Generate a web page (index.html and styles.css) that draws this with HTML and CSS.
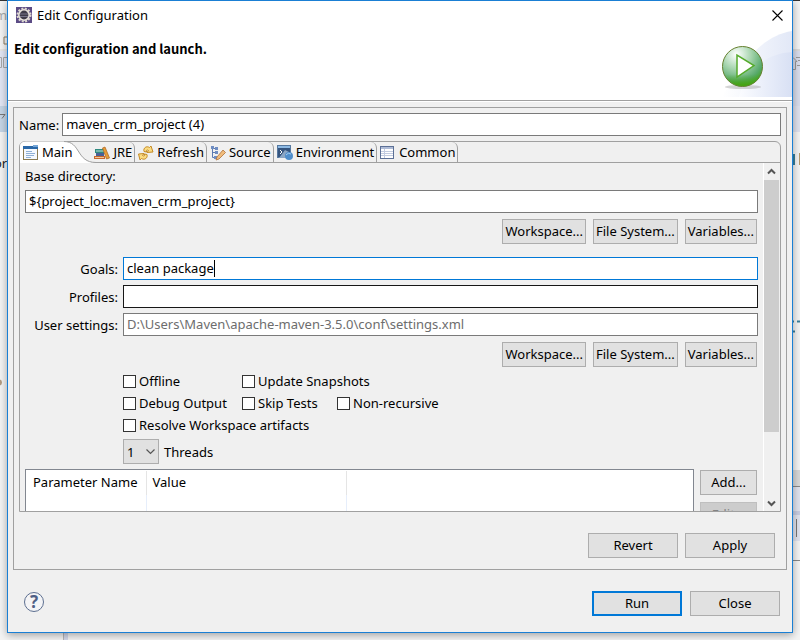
FILE: index.html
```
<!DOCTYPE html>
<html lang="en">
<head>
<meta charset="utf-8">
<title>Edit Configuration</title>
<link rel="stylesheet" href="styles.css">
</head>
<body>
<div class="desktop">
  <div class="backdrop">
    <svg class="strip" viewBox="0 0 7 640" width="7" height="640" aria-hidden="true">
      <rect width="7" height="1" fill="#333"/>
      <rect y="1" width="7" height="48" fill="#f4f4f4"/>
      <path d="M7 37H4V44H7" fill="none" stroke="#8f7f60"/>
      <rect y="49" width="7" height="2" fill="#e6e6e6"/>
      <rect y="51" width="7" height="55" fill="#e2e6f4"/>
      <path d="M0 57.500H1.500V67.500H0M7 57.500H3.500V67.500H7" fill="none" stroke="#a8a8a8"/>
      <rect y="106" width="7" height="26" fill="#c5d5e6"/>
      <path d="M0 114.500H5L2 118.500" fill="none" stroke="#777"/>
      <circle cx="-1" cy="382.500" r="3" fill="#b39b80"/>
      <text x="-5" y="20" class="strip-text pale">m</text>
      <text x="-6" y="168" class="strip-text">or</text>
    </svg>
    <div class="splitter"></div>
    <svg class="strip" viewBox="0 0 7 640" width="7" height="640" aria-hidden="true">
      <rect width="7" height="1" fill="#333"/>
      <rect y="49" width="7" height="2" fill="#dcdcdc"/>
      <rect y="51" width="7" height="55" fill="#d9ddec"/>
      <path d="M0 57.500L4 61.500H2.500V69.500H0M3 57.500H7M5 60.500H7M4 65.500H7" fill="none" stroke="#999"/>
      <rect y="106" width="7" height="26" fill="#dfe2ee"/>
      <rect y="154" width="2" height="11" fill="#3a7e99"/>
      <rect x="6" y="153" width="1" height="12" fill="#b59a6b"/>
      <path d="M0 321.500H1M4 321.500H7M0 331.500H2" stroke="#3a7e99" stroke-width="2"/>
      <rect y="470" width="7" height="16" fill="#d8d8d8"/>
      <rect y="486" width="7" height="1" fill="#888"/>
      <rect y="487" width="7" height="54" fill="#e0e3ee"/>
      <rect y="511" width="7" height="4" fill="#c8cce0"/>
      <rect x="3" y="519" width="1" height="18" fill="#777"/>
      <rect y="560" width="7" height="1" fill="#888"/>
    </svg>
  </div>

  <main class="dialog" role="dialog" aria-labelledby="dialog-title">
    <header class="head">
      <div class="titlebar">
        <svg width="16" height="16" viewBox="0 0 16 16" aria-hidden="true">
          <rect width="16" height="16" fill="#5b4b85"/>
          <circle cx="8" cy="8" r="6.500" fill="none" stroke="#ddd8cf" stroke-width="2" stroke-dasharray="2 1.400"/>
          <circle cx="8" cy="8" r="5.200" fill="#3d3b48" stroke="#e8e4dc" stroke-width="1.600"/>
          <path d="M4 7H12M4 9.500H12" stroke="#77758a"/>
        </svg>
        <h1 id="dialog-title">Edit Configuration</h1>
        <button class="close-x" type="button" aria-label="Close window">
          <svg width="11" height="11" viewBox="0 0 11 11"><path d="M.5 .5L10.500 10.500M10.500 .5L.5 10.500" stroke="#000" stroke-width="1.100"/></svg>
        </button>
      </div>
      <h2>Edit configuration and launch.</h2>
      <svg class="banner" width="75" height="67" viewBox="0 0 75 67" aria-hidden="true">
        <defs>
          <linearGradient id="sweep"><stop offset="0" stop-color="#fff"/><stop offset="1" stop-color="#e2e8f7"/></linearGradient>
          <linearGradient id="sweep2"><stop offset="0" stop-color="#fbfcff"/><stop offset="1" stop-color="#d8e0f4"/></linearGradient>
          <radialGradient id="ball" cx=".35" cy=".2" r=".85"><stop offset="0" stop-color="#fff"/><stop offset=".45" stop-color="#a3d3ab"/><stop offset=".8" stop-color="#58a96c"/><stop offset="1" stop-color="#3fa31c"/></radialGradient>
          <linearGradient id="glow" x2="0" y2="1"><stop offset=".7" stop-color="#4aa820" stop-opacity="0"/><stop offset="1" stop-color="#45a30c"/></linearGradient>
        </defs>
        <path d="M5 67C20 40 42 6 75 1V67Z" fill="url(#sweep)"/>
        <path d="M22 67C28 42 46 24 75 22V67Z" fill="url(#sweep2)"/>
        <ellipse cx="26" cy="57" rx="18" ry="2" fill="#aaa" opacity=".5"/>
        <circle cx="25.500" cy="36.500" r="20" fill="url(#ball)" stroke="#66802f"/>
        <circle cx="25.500" cy="36.500" r="19.500" fill="url(#glow)"/>
        <path d="M20 25V47L37 35.500Z" fill="#fff" stroke="#55ab2b" stroke-width="1.500"/>
      </svg>
    </header>

    <form class="body">
      <section class="group">
        <div class="name-row">
          <label for="name">Name:</label>
          <input id="name" type="text" value="maven_crm_project (4)">
        </div>

        <div class="folder">
          <nav class="tabs" role="tablist">
            <button class="tab active" type="button" role="tab" aria-selected="true">
              <svg class="tab-curve" width="76" height="22" viewBox="0 0 76 22" aria-hidden="true">
                <path d="M0 22V6Q0 .5 6 .5H44C61 .5 56 21.500 75 21.500V22Z" fill="#fff"/>
                <path d="M44 .5C61 .5 56 21.500 76 21.500" fill="none" stroke="#a0a0a0"/>
              </svg>
              <svg class="icon" width="16" height="16" viewBox="0 0 16 16" aria-hidden="true">
                <rect x=".5" y="1.500" width="14" height="13" fill="#f4f9ff" stroke="#8a7b52"/>
                <rect y="1" width="15" height="3" fill="#2a68a8"/><rect x="10" width="5" height="2" fill="#74a6d8"/>
                <path d="M3 6.500H9M3 8.500H12M3 10.500H11M3 12.500H8" stroke="#8fb0d6"/>
              </svg>
              <span>Main</span>
            </button>
            <button class="tab jre" type="button" role="tab">
              <svg class="icon" width="16" height="16" viewBox="0 0 16 16" aria-hidden="true">
                <path d="M1 4H10V8H1Z" fill="#2f8a80"/><path d="M2 6H10" stroke="#bfe0d8"/>
                <path d="M2 8H10V11H2Z" fill="#4a5f96"/><path d="M0 11H11V14H0Z" fill="#c7662e"/><path d="M1 12.500H10" stroke="#f0c898"/>
                <path d="M8.500 3L11 2L15.500 13L12.500 14Z" fill="#e79c36" stroke="#a9621c" stroke-width=".7"/>
              </svg>
              <span>JRE</span>
            </button>
            <button class="tab" type="button" role="tab">
              <svg class="icon" width="16" height="16" viewBox="0 0 16 16" aria-hidden="true">
                <path d="M6 6.500C5 3 8.500 .5 11.500 2.500L13 1L15 7L9 7.500L10.500 5.500C9 4.500 8 5 8.500 7Z" fill="#fbdc83" stroke="#c48a25"/>
                <path d="M9 9.500C10 13 6.500 15.500 3.500 13.500L2 15L.5 9L6 8.500L4.500 10.500C6 11.500 7 11 6.500 9Z" fill="#fbdc83" stroke="#c48a25"/>
              </svg>
              <span>Refresh</span>
            </button>
            <button class="tab" type="button" role="tab">
              <svg class="icon" width="16" height="16" viewBox="0 0 16 16" aria-hidden="true">
                <path d="M2.500 3V12.500H6M2.500 7.500H6M2.500 3.500H6" fill="none" stroke="#5d7bb0"/>
                <path d="M1 1H4V4H1ZM5 2H8V5H5ZM5 6H8V9H5ZM4 11H7V14H4Z" fill="#6f8dc2"/>
                <path d="M13 5L15.500 7.500L9 14L6 15L7 12Z" fill="#f1bd7d" stroke="#b0713a" stroke-width=".8"/>
              </svg>
              <span>Source</span>
            </button>
            <button class="tab" type="button" role="tab">
              <svg class="icon" width="16" height="16" viewBox="0 0 16 16" aria-hidden="true">
                <rect x=".5" y=".5" width="13" height="12" fill="#34547e" stroke="#56789f"/>
                <rect x="1" y="1" width="12" height="2" fill="#8cb9e4"/><path d="M2 13L8 5L12 7V13Z" fill="#8ba6c4"/>
                <path d="M3 5L5 7L3 9" fill="none" stroke="#fff"/>
                <circle cx="12" cy="11" r="4" fill="#4f8ecb"/><path d="M9 10Q11 7 14 9" stroke="#a4cbee" fill="none"/>
              </svg>
              <span>Environment</span>
            </button>
            <button class="tab" type="button" role="tab">
              <svg class="icon" width="16" height="16" viewBox="0 0 16 16" aria-hidden="true">
                <rect x=".5" y="1.500" width="13" height="12" fill="#fff" stroke="#5c7096"/>
                <rect x="1" y="2" width="12" height="2" fill="#aebbd6"/>
                <path d="M4.500 4V13M1 6.500H13M1 8.500H13M1 10.500H13" stroke="#c3cce0"/>
              </svg>
              <span>Common</span>
            </button>
          </nav>

          <div class="pane">
            <div class="content">
              <label class="base-label" for="base">Base directory:</label>
              <input id="base" type="text" value="${project_loc:maven_crm_project}">
              <div class="actions">
                <button class="btn" type="button">Workspace...</button>
                <button class="btn" type="button">File System...</button>
                <button class="btn" type="button">Variables...</button>
              </div>

              <div class="fields">
                <label for="goals">Goals:</label>
                <div class="field focus"><input id="goals" type="text" value="clean package"><span class="caret-line"><span class="ghost">clean package</span></span></div>
                <label for="profiles">Profiles:</label>
                <input id="profiles" class="hover" type="text">
                <label for="settings">User settings:</label>
                <input id="settings" class="hint" type="text" value="D:\Users\Maven\apache-maven-3.5.0\conf\settings.xml">
              </div>
              <div class="actions">
                <button class="btn" type="button">Workspace...</button>
                <button class="btn" type="button">File System...</button>
                <button class="btn" type="button">Variables...</button>
              </div>

              <div class="checks">
                <label><input type="checkbox">Offline</label>
                <label class="wide"><input type="checkbox">Update Snapshots</label>
                <label><input type="checkbox">Debug Output</label>
                <label><input type="checkbox">Skip Tests</label>
                <label><input type="checkbox">Non-recursive</label>
                <label class="full"><input type="checkbox">Resolve Workspace artifacts</label>
              </div>
              <div class="threads">
                <div class="select">
                  <select id="threads"><option>1</option><option>2</option><option>4</option></select>
                  <svg width="9" height="6" viewBox="0 0 9 6" aria-hidden="true"><path d="M.5 .5L4.500 4.500L8.500 .5" fill="none" stroke="#555" stroke-width="1.200"/></svg>
                </div>
                <label for="threads">Threads</label>
              </div>

              <div class="params">
                <div class="table-box">
                  <table>
                    <colgroup><col class="c1"><col class="c2"><col></colgroup>
                    <thead><tr><th>Parameter Name</th><th>Value</th><th></th></tr></thead>
                    <tbody><tr><td></td><td></td><td></td></tr></tbody>
                  </table>
                </div>
                <div class="params-actions">
                  <button class="btn" type="button">Add...</button>
                  <button class="btn" type="button" disabled>Edit...</button>
                </div>
              </div>
            </div>
            <div class="scrollbar" aria-hidden="true">
              <svg width="9" height="7" viewBox="0 0 9 7"><path d="M1 5.500L4.500 2L8 5.500" fill="none" stroke="#555" stroke-width="2"/></svg>
              <div class="track"><div class="thumb"></div></div>
              <svg width="9" height="7" viewBox="0 0 9 7"><path d="M1 1.500L4.500 5L8 1.500" fill="none" stroke="#555" stroke-width="2"/></svg>
            </div>
          </div>
        </div>

        <div class="group-actions">
          <button class="btn large" type="button">Revert</button>
          <button class="btn large" type="button">Apply</button>
        </div>
      </section>

      <footer class="foot">
        <button class="help" type="button" aria-label="Help">?</button>
        <button class="btn large default" type="button">Run</button>
        <button class="btn large" type="button">Close</button>
      </footer>
    </form>
  </main>
</div>
</body>
</html>
```
FILE: styles.css
```
* { box-sizing: border-box; }

body {
  margin: 0;
  background: #f4f4f4;
  color: #000;
  font: 13px/18px "Noto Sans", "Noto Sans CJK SC", sans-serif;
}

button, input, select { font: inherit; color: inherit; margin: 0; }

.desktop {
  position: relative;
  height: 100vh;
  min-height: 560px;
  padding: 0 7px 7px;
  overflow: hidden;
}

.backdrop {
  position: absolute;
  inset: 0;
  display: flex;
}

.splitter {
  width: 5px;
  margin: 0 auto 0 56px;
  border-left: 1px solid #b5b5b5;
  background: #d3d8ea;
}

.strip { display: block; }
.strip-text { font-size: 13px; fill: #222; }
.strip-text.pale { fill: #aaa; }

.dialog {
  position: relative;
  display: flex;
  flex-direction: column;
  height: 100%;
  border: 1px solid #1a7fd4;
  background: #f0f0f0;
  box-shadow: 0 2px 8px rgba(0, 0, 0, .35);
}

/* Header */
.head {
  position: relative;
  height: 100px;
  flex: none;
  background: #fff;
  border-bottom: 1px solid #a0a0a0;
}

.titlebar {
  display: flex;
  align-items: center;
  gap: 5px;
  height: 28px;
  padding: 0 9px 0 8px;
}

h1, h2 { margin: 0; font-size: 13px; line-height: 18px; }
h1 { flex: 1; font-weight: 400; }
h2 {
  padding: 11px 6px;
  font-family: "Noto Sans CJK SC", "Noto Sans", sans-serif;
  font-weight: 700;
}

.close-x {
  display: flex;
  padding: 0;
  border: 0;
  background: none;
}

.banner { position: absolute; right: 0; bottom: 3px; }

/* Body */
.body {
  display: flex;
  flex: 1;
  flex-direction: column;
  min-height: 0;
  padding: 5px 5px 0;
  border-top: 1px solid #fff;
}

.group {
  display: flex;
  flex: 1;
  flex-direction: column;
  min-height: 0;
  padding: 5px;
  border: 1px solid #a0a0a0;
}

.name-row { display: flex; align-items: center; gap: 3px; }

input[type="text"] {
  display: block;
  flex: 1;
  width: 100%;
  min-width: 0;
  height: 23px;
  padding: 0 3px 2px;
  border: 1px solid #7a7a7a;
  border-radius: 0;
  background: #fff;
  outline: 0;
}

.folder {
  display: flex;
  flex: 1;
  flex-direction: column;
  min-height: 0;
  margin-top: 5px;
  border: 1px solid #a0a0a0;
  border-radius: 6px 6px 0 0;
}

.tabs {
  display: flex;
  height: 21px;
  flex: none;
  border-bottom: 1px solid #a0a0a0;
}

.tab {
  position: relative;
  display: flex;
  align-items: center;
  gap: 3px;
  height: 21px;
  padding: 0 2px 0 3px;
  border: 0;
  border-right: 1px solid #a0a0a0;
  border-radius: 0 6px 0 0;
  background: none;
}

.tab .icon, .tab span { position: relative; }
.tab span { line-height: 16px; padding-bottom: 2px; }
.tab.active { padding-right: 0; border: 0; }
.tab.jre { padding-left: 22px; }
.tab-curve { position: absolute; top: -1px; left: 0; }

.pane { display: flex; flex: 1; min-height: 0; }

.content {
  flex: 1;
  min-width: 0;
  padding: 5px 5px 0;
  overflow: hidden;
}

.base-label { display: block; margin-bottom: 6px; line-height: 16px; }

.actions {
  display: flex;
  justify-content: flex-end;
  gap: 7px;
  padding: 6px 1px 0 0;
}

.btn {
  height: 25px;
  padding: 0 2px 2px;
  border: 1px solid #adadad;
  background: #e1e1e1;
  white-space: nowrap;
  line-height: 18px;
}

.btn:disabled { border-color: #bfbfbf; background: #ccc; color: #838383; }
.btn.large { width: 90px; }
.btn.default { border: 2px solid #0078d7; }

.fields {
  display: grid;
  grid-template-columns: 93px 1fr;
  gap: 5px;
  align-items: center;
  margin-top: 13px;
}

.fields label { text-align: right; }
.field { position: relative; }
.field.focus input { border-color: #0078d7; }
.caret-line {
  position: absolute;
  top: 3px;
  left: 4px;
  height: 17px;
  border-right: 1px solid #000;
  pointer-events: none;
}
.ghost { visibility: hidden; }
input.hover { border-color: #171717; }
input.hint { color: #6d6d6d; }

.checks {
  display: grid;
  grid-template-columns: 119px 95px 1fr;
  row-gap: 4px;
  margin: 5px 0 0 98px;
}

.checks label { display: flex; align-items: center; gap: 3px; }
.checks .wide { grid-column: span 2; }
.checks .full { grid-column: 1 / -1; }

input[type="checkbox"] {
  width: 13px;
  height: 13px;
  appearance: none;
  border: 1px solid #333;
  background: #fff;
}

.threads {
  display: flex;
  align-items: center;
  gap: 5px;
  margin: 5px 0 0 98px;
}

.select { position: relative; }
.select select {
  display: block;
  width: 36px;
  height: 25px;
  padding: 0 3px;
  appearance: none;
  border: 1px solid #adadad;
  border-radius: 0;
  background: #e1e1e1;
}
.select svg { position: absolute; top: 10px; right: 4px; pointer-events: none; }

.params { display: flex; gap: 6px; margin-top: 5px; padding-right: 1px; }

.table-box {
  flex: 1;
  height: 120px;
  padding-top: 1px;
  border: 1px solid #828790;
  background: #fff;
}

table { width: 100%; border-collapse: collapse; table-layout: fixed; }
.c1 { width: 120px; }
.c2 { width: 200px; }
th {
  height: 24px;
  padding: 0 6px 2px;
  border-right: 1px solid #e5e5e5;
  font-weight: 400;
  text-align: left;
}
th:first-child { padding-left: 7px; }
td { height: 90px; border-right: 1px solid #e6eefb; }
th:last-child, td:last-child { border-right: 0; }

.params-actions {
  display: flex;
  flex-direction: column;
  gap: 7px;
  width: 57px;
  padding-top: 1px;
}

.scrollbar {
  display: flex;
  flex-direction: column;
  align-items: center;
  width: 17px;
  padding: 5px 1px 4px 0;
  border-left: 1px solid #fff;
}
.track { flex: 1; width: 100%; padding: 5px 0; }
.thumb { height: 80%; background: #cdcdcd; }

.group-actions {
  display: flex;
  justify-content: flex-end;
  gap: 7px;
  padding: 21px 6px 6px;
}

.foot {
  display: flex;
  align-items: flex-start;
  gap: 8px;
  padding: 21px 7px 16px 11px;
}

.help {
  width: 20px;
  height: 20px;
  margin: 1px auto 0 0;
  padding: 0;
  border: 1px solid #5d6f90;
  border-radius: 50%;
  background: #f4f4f6;
  color: #4f6085;
  font-size: 17px;
  font-weight: 700;
  line-height: 18px;
}
```
